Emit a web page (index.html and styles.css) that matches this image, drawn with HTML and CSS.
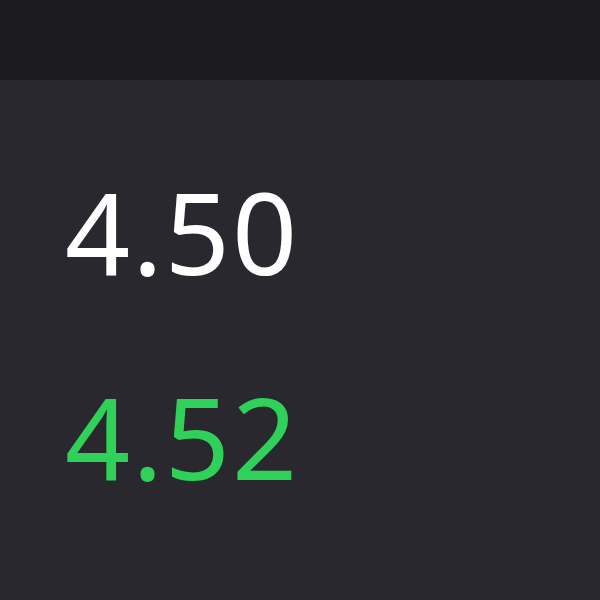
FILE: index.html
```html
<!DOCTYPE html>
<html lang="en">
  <head>
    <meta charset="UTF-8">
    <meta name="viewport" content="width=device-width, initial-scale=1.0">
    <title>Prices</title>
    <link rel="stylesheet" href="styles.css">
  </head>
  <body>
    <div class="top-bar"></div>

    <div class="price-list">
        <div class="price">4.50</div>
        <div class="price price-up">4.52</div>
    </div>
  </body>
</html>
```

FILE: styles.css
```css
:root {
    --bg-bar: #1b1b1e;
    --bg-main: #29282e;
    --text-primary: #ffffff;
    --up-color: #30d158;
}

body {
    font-family: 'Noto Sans', 'Open Sans', sans-serif;
    margin: 0;
    padding: 0;
    background-color: var(--bg-main);
    color: var(--text-primary);
    min-height: 100vh;
}

.top-bar {
    height: 80px;
    background-color: var(--bg-bar);
}

.price-list {
    display: flex;
    flex-direction: column;
    gap: 91px;
    padding: 94px 0 0 65px;
}

.price {
    font-size: 114px;
    font-weight: 380;
    letter-spacing: 2px;
    line-height: 1;
}

.price-up {
    color: var(--up-color);
}
```
